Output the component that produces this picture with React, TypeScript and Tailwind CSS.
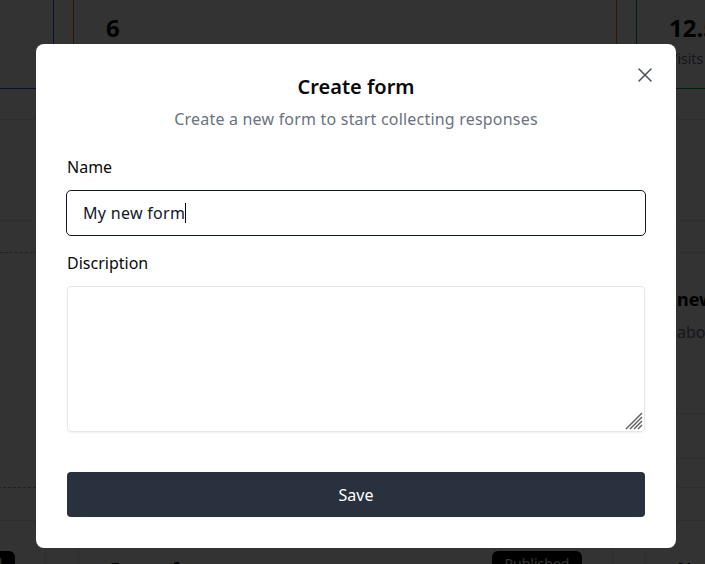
import React from "react";

function StatCard({ border, value, label, iconColor }: { border: string; value: string; label: string; iconColor: string }) {
  return (
    <div className={`w-[544px] h-[129px] shrink-0 rounded-lg border bg-white ${border} px-8 pt-4 flex flex-col`}>
      <div className="flex items-center justify-between h-[24px]">
        <span className="text-sm text-gray-500">Total</span>
        <span className={`w-[16px] h-[16px] rounded-sm ${iconColor}`} />
      </div>
      <div className="mt-[11px] text-2xl font-bold text-black leading-[32px]">{value}</div>
      <div className="text-sm text-gray-500 leading-[20px] mt-[5px]">{label}</div>
    </div>
  );
}

function FormCard({ title, desc }: { title: string; desc: string }) {
  return (
    <div className="w-[535px] h-[236px] shrink-0 rounded-lg border border-gray-200 bg-white flex flex-col">
      <div className="px-[31px] pt-[34px]">
        <div className="text-lg font-bold text-black leading-[24px]">{title}</div>
        <div className="mt-[9px] text-base text-gray-500">{desc}</div>
      </div>
      <div className="mt-auto border-t border-gray-200 h-[45px]" />
      <div className="border-t border-gray-200 h-[29px]" />
    </div>
  );
}

function SmallCard({ title }: { title: string }) {
  return (
    <div className="w-[535px] h-[120px] shrink-0 rounded-lg border border-gray-200 bg-white pl-[31px] pr-[30px] pt-[30px]">
      <div className="flex items-start justify-between">
        <span className="text-lg font-bold text-black mt-[4px]">{title}</span>
        <span className="rounded-md bg-black text-white text-sm px-[10px] h-[26px] leading-[26px] w-[90px] text-center">Published</span>
      </div>
    </div>
  );
}

export default function App() {
  return (
    <div
      className="relative w-[705px] h-[564px] overflow-hidden bg-white"
      style={{ fontFamily: '"Segoe UI", "Noto Sans", sans-serif' }}
    >
      {/* background dashboard */}
      <div className="flex flex-col -mt-[40px]">
        <div className="flex gap-[19px] -ml-[490px]">
          <StatCard border="border-blue-600" value="4" label="Visits" iconColor="bg-blue-600" />
          <StatCard border="border-yellow-600" value="6" label="Submissions" iconColor="bg-yellow-600" />
          <StatCard border="border-green-600" value="12.5%" label="Visits that result in submissions" iconColor="bg-green-600" />
        </div>
        <div className="mt-[30px] border-t border-gray-200 h-[101px]" />
        <div className="border-t border-gray-200" />
        <div className="mt-[31px] flex gap-[32px] -ml-[489px]">
          <div className="w-[535px] h-[236px] shrink-0 rounded-lg border border-dashed border-gray-400 bg-white" />
          <FormCard title="My new form" desc="Empty" />
          <FormCard title="new form" desc="about the form" />
        </div>
        <div className="mt-[32px] flex gap-[32px] -ml-[489px]">
          <SmallCard title="Form" />
          <SmallCard title="Empty form" />
          <SmallCard title="New form" />
        </div>
      </div>

      {/* overlay */}
      <div className="absolute inset-0 bg-black/80" />

      {/* dialog */}
      <div className="absolute left-[36px] top-[44px] w-[640px] h-[504px] rounded-lg bg-white px-[31px] pt-[29px] pb-[31px] flex flex-col">
        <button className="absolute right-[19px] top-[19px] w-[24px] h-[24px] flex items-center justify-center text-[#4b5563]">
          <svg width="24" height="24" viewBox="0 0 24 24" fill="none" stroke="currentColor" strokeWidth="1.6" strokeLinecap="round">
            <path d="M18 6 6 18" />
            <path d="m6 6 12 12" />
          </svg>
        </button>
        <h2 className="text-center text-[20px] leading-[28px] font-semibold text-[#0a0a0a]">Create form</h2>
        <p className="mt-[6px] text-center text-base leading-[24px] tracking-[0.2px] text-[#6b7280]">
          Create a new form to start collecting responses
        </p>
        <label className="mt-[24px] text-base leading-[24px] text-[#0a0a0a]">Name</label>
        <div className="mt-[11px] -mx-[1px] h-[46px] rounded-[5px] border border-[#111827] flex items-center px-[16px] text-base text-[#0f172a] tracking-[0.3px]">
          <span>My new form</span>
          <span className="inline-block w-[1px] h-[20px] bg-black" />
        </div>
        <label className="mt-[15px] text-base leading-[24px] text-[#0a0a0a]">Discription</label>
        <div className="relative mt-[11px] h-[146px]">
          <textarea
            className="w-full h-full resize-none rounded-[4px] border border-[#e5e7eb] shadow-[0_1px_2px_rgba(0,0,0,0.06)] outline-none px-3 py-2 text-base"
            defaultValue=""
          />
          <svg className="absolute right-[2px] bottom-[2px]" width="18" height="18" viewBox="0 0 18 18" stroke="#5f5f5f" strokeWidth="1.5">
            <path d="M17 1 1 17" />
            <path d="M17 5 5 17" />
            <path d="M17 9 9 17" />
            <path d="M17 13 13 17" />
          </svg>
        </div>
        <button className="mt-auto h-[45px] rounded-[4px] bg-[#29303e] text-white text-base">Save</button>
      </div>
    </div>
  );
}
